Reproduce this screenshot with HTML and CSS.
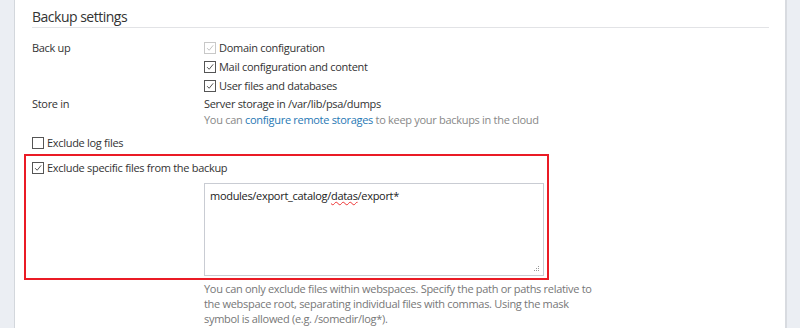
FILE: index.html
```html
<html>
  <head>
    <meta charset="utf-8">
    <link rel="stylesheet" href="styles.css">
  </head>
  <body>
    <div class="page">
      <div class="side side-left"></div>
      <div class="main">
        <h2 class="title">Backup settings</h2>

        <div class="form-row">
          <div class="label">Back up</div>
          <div class="field">
            <div class="check-line">
              <span class="box disabled"><svg viewBox="0 0 12 12"><path d="M2.5 6.2 L5 8.7 L9.8 2.8"/></svg></span>
              <span class="check-text">Domain configuration</span>
            </div>
            <div class="check-line">
              <span class="box"><svg viewBox="0 0 12 12"><path d="M2.5 6.2 L5 8.7 L9.8 2.8"/></svg></span>
              <span class="check-text">Mail configuration and content</span>
            </div>
            <div class="check-line">
              <span class="box"><svg viewBox="0 0 12 12"><path d="M2.5 6.2 L5 8.7 L9.8 2.8"/></svg></span>
              <span class="check-text">User files and databases</span>
            </div>
          </div>
        </div>

        <div class="form-row">
          <div class="label store">Store in</div>
          <div class="field">
            <div class="plain-line">Server storage in /var/lib/psa/dumps</div>
            <div class="hint">You can <a class="link" href="#">configure remote storages</a> to keep your backups in the cloud</div>
          </div>
        </div>

        <div class="check-line single">
          <span class="box empty"></span>
          <span class="check-text">Exclude log files</span>
        </div>

        <div class="highlight">
          <div class="check-line single">
            <span class="box"><svg viewBox="0 0 12 12"><path d="M2.5 6.2 L5 8.7 L9.8 2.8"/></svg></span>
            <span class="check-text">Exclude specific files from the backup</span>
          </div>
          <div class="form-row">
            <div class="label"></div>
            <div class="field">
              <div class="textarea">modules/export_catalog/<span class="typo">datas</span>/export*<svg class="grip" viewBox="0 0 6 6"><rect x="4" y="0" width="1" height="1"/><rect x="2" y="2" width="1" height="1"/><rect x="4" y="2" width="1" height="1"/><rect x="0" y="4" width="1" height="1"/><rect x="2" y="4" width="1" height="1"/><rect x="4" y="4" width="1" height="1"/></svg></div>
            </div>
          </div>
        </div>

        <div class="form-row">
          <div class="label"></div>
          <div class="field">
            <div class="help">You can only exclude files within webspaces. Specify the path or paths relative to the webspace root, separating individual files with commas. Using the mask symbol is allowed (e.g. /somedir/log*).</div>
          </div>
        </div>
      </div>
      <div class="side side-right"></div>
    </div>
  </body>
</html>
```

FILE: styles.css
```css
body {
    margin: 0;
    background: #fff;
    font-family: "Open Sans", "Liberation Sans", sans-serif;
    font-size: 11px;
    letter-spacing: -0.3px;
    color: #333;
}
.page {
    display: flex;
    height: 328px;
    overflow: hidden;
}
.side {
    background: #ebeef3;
}
.side-left {
    border-right: 1px solid #d3d7dc;
    width: 14px;
}
.side-right {
    border-left: 2px solid #d8dbe0;
    width: 13px;
}
.main {
    flex: 1;
    padding: 0 16px 0 17px;
}
.title {
    margin: 0;
    padding-top: 7px;
    font-size: 14px;
    letter-spacing: -0.5px;
    font-weight: normal;
    line-height: 20px;
    color: #333;
    border-bottom: 1px solid #e2e3e6;
    margin-bottom: 10px;
}
.form-row {
    display: flex;
}
.label {
    width: 172px;
    line-height: 19px;
}
.label.store {
    line-height: 17px;
}
.field {
    flex: 1;
}
.check-line {
    display: flex;
    align-items: center;
    height: 19px;
}
.box {
    border: 1px solid #555;
    box-sizing: border-box;
    width: 12px;
    height: 12px;
    margin-right: 3px;
    display: flex;
}
.box svg {
    width: 10px;
    height: 10px;
    fill: none;
    stroke: #444;
    stroke-width: 1.1;
}
.box.disabled {
    border-color: #c8c8c8;
}
.box.disabled svg {
    stroke: #bbb;
}
.plain-line {
    line-height: 17px;
}
.hint {
    color: #888;
    line-height: 15px;
}
.link {
    color: #1f78b4;
    text-decoration: none;
}
.main > .check-line.single {
    margin-top: 6px;
}
.highlight {
    margin: 2px 0 0 -8px;
    border: 2px solid #ea1b25;
    width: 515px;
    padding: 2px 0 2px 6px;
}
.textarea {
    position: relative;
    margin-top: 6px;
    margin-right: 3px;
    height: 93px;
    box-sizing: border-box;
    border: 1px solid #c9ccd3;
    padding: 4px 5px;
    line-height: 15px;
    color: #222;
}
.typo {
    text-decoration: underline wavy #e33;
    text-decoration-thickness: 1px;
}
.grip {
    position: absolute;
    right: 3px;
    bottom: 3px;
    width: 6px;
    height: 6px;
    fill: #999;
}
.help {
    width: 395px;
    margin-top: 1px;
    color: #777;
    line-height: 15px;
}
```
